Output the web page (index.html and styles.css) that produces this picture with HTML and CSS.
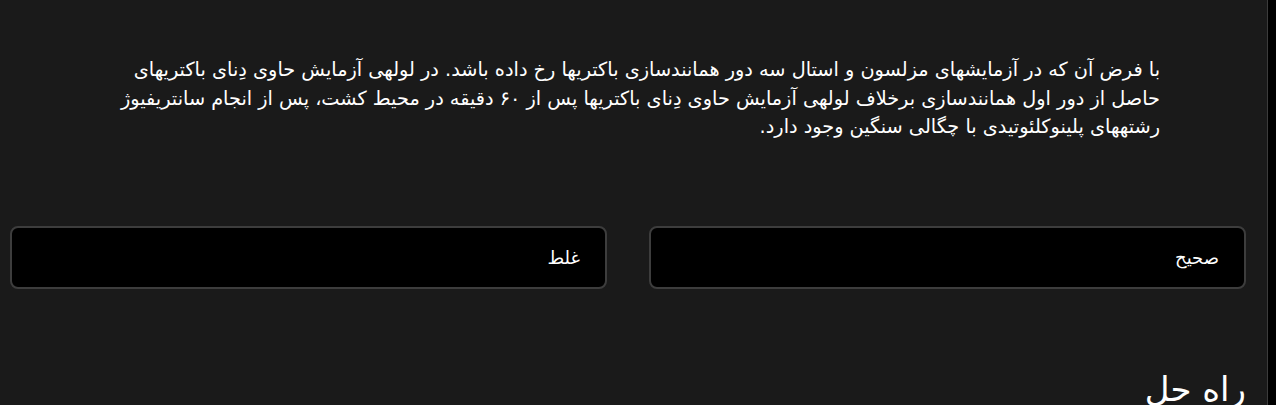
FILE: index.html
```html
<!DOCTYPE html>
<html lang="fa" dir="rtl">
<head>
    <meta charset="utf-8">
    <title>سوال</title>
    <link rel="stylesheet" href="styles.css">
</head>
<body>
    <div class="page">
        <div class="question">
            <p class="question-text">با فرض آن که در آزمایشهای مزلسون و استال سه دور همانندسازی باکتریها رخ داده باشد. در لولهی آزمایش حاوی دِنای باکتریهای حاصل از دور اول همانندسازی برخلاف لولهی آزمایش حاوی دِنای باکتریها پس از ۶۰ دقیقه در محیط کشت، پس از انجام سانتریفیوژ رشتههای پلینوکلئوتیدی با چگالی سنگین وجود دارد.</p>
        </div>
        <div class="options">
            <button class="option">صحیح</button>
            <button class="option">غلط</button>
        </div>
        <h2 class="solution-title">راه حل</h2>
    </div>
</body>
</html>
```

FILE: styles.css
```css
html { background: #000; }
body { margin: 0; font-family: "DejaVu Sans", sans-serif; color: #fff; overflow: hidden; }
.page { background: #1a1a1a; margin-right: 8px; border-right: 1px solid #3c3c3c; padding: 0 21px 0 10px; min-height: 405px; box-sizing: border-box; }
.question { padding: 56px 86px 0 98px; }
.question-text { margin: 0; font-size: 19.3px; line-height: 28.5px; text-align: right; }
.options { display: flex; gap: 42px; margin-top: 84px; }
.option { flex: 1; height: 63px; background: #000; color: #fff; border: 2px solid #3d3d3d; border-radius: 8px; font-family: inherit; font-size: 18px; text-align: right; padding: 0 25px; cursor: pointer; }
.solution-title { margin: 80px 0 0; font-size: 34px; font-weight: normal; }
```
